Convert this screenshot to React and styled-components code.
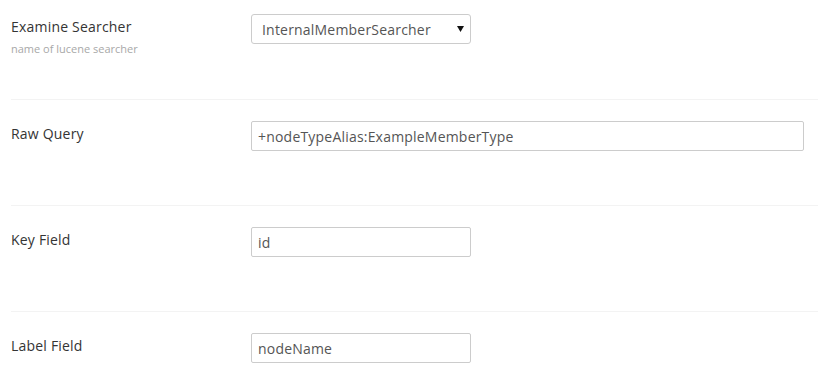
import React from "react";
import styled, { createGlobalStyle } from "styled-components";

const GlobalStyle = createGlobalStyle`
  body {
    margin: 0;
    background: #fff;
    font-family: "Open Sans", "DejaVu Sans", sans-serif;
  }
`;

const Page = styled.div`
  padding-left: 11px;
  width: 807px;
`;

const Row = styled.div`
  display: grid;
  grid-template-columns: 240px 1fr;
  align-items: start;
  box-sizing: border-box;
  height: ${(p) => (p.first ? "100px" : "106px")};
  padding-top: ${(p) => (p.first ? "14px" : "21px")};
  border-bottom: 1px solid #f3f3f3;

  &:last-child {
    height: auto;
    padding-bottom: 26px;
  }
`;

const LabelCol = styled.div`
  padding-top: 3px;
`;

const Label = styled.label`
  display: block;
  font-size: 14px;
  line-height: 20px;
  letter-spacing: 0.2px;
  color: #343434;
`;

const Description = styled.small`
  display: block;
  margin-top: 4px;
  font-size: 11px;
  line-height: 16px;
  color: #a8a8a8;
`;

const Input = styled.input`
  box-sizing: border-box;
  width: ${(p) => (p.wide ? "553px" : "220px")};
  height: 30px;
  margin: 0;
  padding: 0 6px;
  border: 1px solid #cccccc;
  border-radius: 2px;
  background: #fff;
  font-family: inherit;
  font-size: 14px;
  letter-spacing: 0.2px;
  color: #555;
  outline: none;
`;

const SelectWrap = styled.div`
  position: relative;
  width: 220px;
  height: 30px;
`;

const Select = styled.select`
  appearance: none;
  box-sizing: border-box;
  width: 100%;
  height: 30px;
  margin: 0;
  padding: 0 24px 0 10px;
  border: 1px solid #cccccc;
  border-radius: 3px;
  background: #fff;
  font-family: inherit;
  font-size: 14px;
  letter-spacing: 0.2px;
  color: #555;
  outline: none;
`;

const Caret = styled.svg`
  position: absolute;
  right: 7px;
  top: 12px;
  pointer-events: none;
`;

export default function App() {
  return (
    <>
      <GlobalStyle />
      <Page>
        <Row first>
          <LabelCol>
            <Label>Examine Searcher</Label>
            <Description>name of lucene searcher</Description>
          </LabelCol>
          <SelectWrap>
            <Select defaultValue="InternalMemberSearcher">
              <option>InternalMemberSearcher</option>
              <option>InternalSearcher</option>
              <option>ExternalSearcher</option>
            </Select>
            <Caret width="7" height="6" viewBox="0 0 7 6">
              <path d="M0 0 H7 L3.5 6 Z" fill="#111" />
            </Caret>
          </SelectWrap>
        </Row>
        <Row>
          <LabelCol>
            <Label>Raw Query</Label>
          </LabelCol>
          <Input wide defaultValue="+nodeTypeAlias:ExampleMemberType" />
        </Row>
        <Row>
          <LabelCol>
            <Label>Key Field</Label>
          </LabelCol>
          <Input defaultValue="id" />
        </Row>
        <Row>
          <LabelCol>
            <Label>Label Field</Label>
          </LabelCol>
          <Input defaultValue="nodeName" />
        </Row>
      </Page>
    </>
  );
}
